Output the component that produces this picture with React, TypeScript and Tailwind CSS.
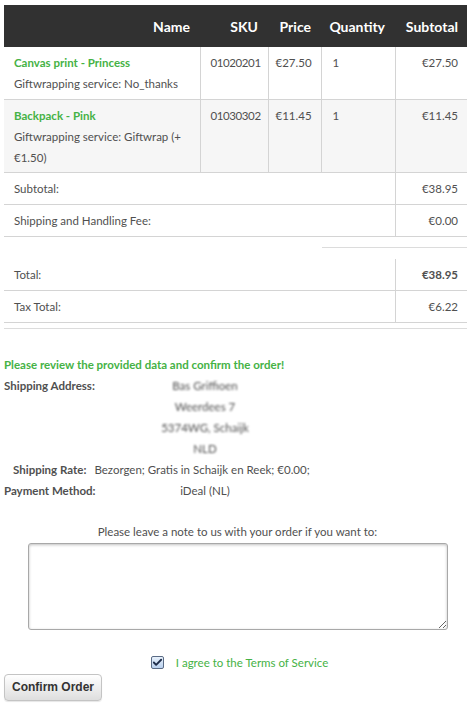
import { Check } from "lucide-react";

const items = [
  { name: "Canvas print - Princess", option: "Giftwrapping service: No_thanks", sku: "01020201", price: "€27.50", qty: "1", subtotal: "€27.50" },
  { name: "Backpack - Pink", option: "Giftwrapping service: Giftwrap (+ €1.50)", sku: "01030302", price: "€11.45", qty: "1", subtotal: "€11.45" },
];

function SummaryRow({ label, value, bold }: { label: string; value: string; bold?: boolean }) {
  return (
    <div className="flex h-[32px] items-center border-b border-[#d4d4d4]">
      <div className="flex-1 pl-[10px]">{label}</div>
      <div className={`w-[72px] self-stretch flex items-center justify-end pr-[9px] border-l border-[#d4d4d4] ${bold ? "font-bold" : ""}`}>{value}</div>
    </div>
  );
}

export default function App() {
  return (
    <div className="w-[475px] min-h-[705px] bg-white px-1 pt-[5px] text-[11.5px] leading-[21px] text-[#505050] font-['Lato',sans-serif]">
      <table className="w-[463px] border-collapse table-fixed">
        <colgroup>
          <col className="w-[196px]" />
          <col className="w-[68px]" />
          <col className="w-[53px]" />
          <col className="w-[74px]" />
          <col className="w-[72px]" />
        </colgroup>
        <thead>
          <tr className="h-[42px] bg-[#313131] text-white text-[14px]">
            <th className="text-right pr-[10px] font-bold">Name</th>
            <th className="text-right pr-[10px] font-bold">SKU</th>
            <th className="text-right pr-[10px] font-bold">Price</th>
            <th className="text-right pr-[10px] font-bold">Quantity</th>
            <th className="text-right pr-[9px] font-bold">Subtotal</th>
          </tr>
        </thead>
        <tbody>
          {items.map((it, i) => (
            <tr key={it.sku} className={`border-b border-[#d4d4d4] align-top ${i % 2 ? "bg-[#f6f6f6] h-[73px]" : "bg-white h-[52px]"}`}>
              <td className="pl-[10px] pr-2 pt-[5px]">
                <div className="font-bold text-[#45b245]">{it.name}</div>
                <div>{it.option}</div>
              </td>
              <td className="pl-[10px] pt-[5px] border-l border-[#d4d4d4] tracking-[-0.4px]">{it.sku}</td>
              <td className="pl-[7px] pt-[5px] border-l border-[#d4d4d4]">{it.price}</td>
              <td className="pl-[11px] pt-[5px] border-l border-[#d4d4d4]">{it.qty}</td>
              <td className="pr-[9px] pt-[5px] text-right border-l border-[#d4d4d4]">{it.subtotal}</td>
            </tr>
          ))}
        </tbody>
      </table>

      <div className="w-[463px]">
        <SummaryRow label="Subtotal:" value="€38.95" />
        <SummaryRow label="Shipping and Handling Fee:" value="€0.00" />
        <div className="h-[22px] flex flex-col justify-center items-end">
          <div className="w-[145px] border-t border-[#dcdcdc]" />
        </div>
        <SummaryRow label="Total:" value="€38.95" bold />
        <SummaryRow label="Tax Total:" value="€6.22" />
        <div className="mt-[5px] border-t border-[#dcdcdc]" />
      </div>

      <div className="mt-[25px] font-bold text-[#45b245]">Please review the provided data and confirm the order!</div>

      <div className="grid grid-cols-[106px_190px]">
        <div className="font-bold">Shipping Address:</div>
        <div className="text-center blur-[1.2px]">Bas Griffioen</div>
        <div />
        <div className="text-center blur-[1.2px]">Weerdees 7</div>
        <div />
        <div className="text-center blur-[1.2px]">5374WG, Schaijk</div>
        <div />
        <div className="text-center blur-[1.2px]">NLD</div>
      </div>
      <div className="pl-[9px]">
        <span className="font-bold">Shipping Rate:</span>
        <span className="ml-[8px]">Bezorgen; Gratis in Schaijk en Reek; €0.00;</span>
      </div>
      <div className="grid grid-cols-[106px_190px]">
        <div className="font-bold">Payment Method:</div>
        <div className="text-center">iDeal (NL)</div>
      </div>

      <div className="mt-[20px] text-center">Please leave a note to us with your order if you want to:</div>
      <div className="flex justify-center mt-[1px]">
        <textarea className="block w-[420px] h-[87px] resize border border-[#a8a8a8] rounded-[3px] bg-white shadow-[inset_0_1px_3px_rgba(0,0,0,0.25)] outline-none" />
      </div>

      <div className="mt-[22px] flex items-center justify-center gap-[12px] pl-[4px]">
        <span className="w-[13px] h-[13px] border border-[#5a6b85] rounded-[2px] bg-gradient-to-b from-[#e8f1fb] to-[#b9d0ee] flex items-center justify-center">
          <Check size={11} strokeWidth={4} color="#1f2d4a" />
        </span>
        <span className="text-[#45b245]">I agree to the Terms of Service</span>
      </div>

      <button className="mt-[1px] w-[98px] h-[27px] border border-[#c4c4c4] rounded-[4px] bg-gradient-to-b from-white to-[#dedede] text-[12px] font-bold text-[#333] font-['Liberation_Sans',sans-serif] shadow-[0_1px_1px_rgba(0,0,0,0.1)]">
        Confirm Order
      </button>
    </div>
  );
}
